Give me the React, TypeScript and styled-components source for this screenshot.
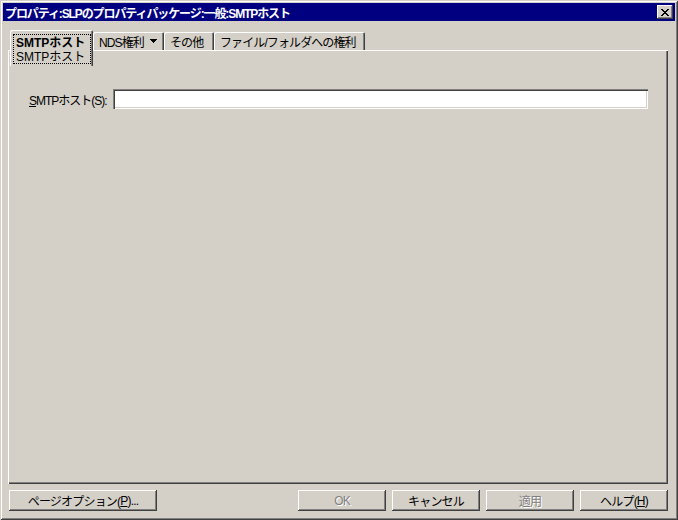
import React from "react";
import styled, { createGlobalStyle } from "styled-components";

const GlobalStyle = createGlobalStyle`
  html, body {
    margin: 0;
    padding: 0;
    background: #d4d0c8;
  }
  body {
    font-family: "Liberation Sans", "Noto Sans CJK JP", sans-serif;
    font-size: 12px;
    color: #000;
  }
`;

const Window = styled.div`
  box-sizing: border-box;
  width: 678px;
  height: 520px;
  display: flex;
  flex-direction: column;
  padding: 3px;
  background: #d4d0c8;
  box-shadow: inset 1px 1px #d4d0c8, inset -1px -1px #404040,
    inset 2px 2px #fff, inset -2px -2px #808080;
`;

const TitleBar = styled.div`
  height: 18px;
  display: flex;
  align-items: center;
  background: #000080;
  padding: 0 2px 0 2px;
`;

const TitleText = styled.span`
  flex: 1;
  color: #fff;
  font-weight: bold;
  font-size: 12px;
  letter-spacing: -1.1px;
  white-space: nowrap;
`;

const CloseButton = styled.div`
  box-sizing: border-box;
  width: 16px;
  height: 14px;
  display: flex;
  align-items: center;
  justify-content: center;
  background: #d4d0c8;
  box-shadow: inset -1px -1px #404040, inset 1px 1px #fff,
    inset -2px -2px #808080;
`;

const Body = styled.div`
  flex: 1;
  display: flex;
  flex-direction: column;
  padding: 9px 7px 6px 5px;
`;

const TabRow = styled.div`
  position: relative;
  z-index: 1;
  display: flex;
  align-items: flex-start;
  height: 20px;
  padding-left: 2px;
`;

const ActiveTab = styled.div`
  box-sizing: border-box;
  width: 83px;
  height: 36px;
  padding: 4px 2px 2px 3px;
  background: #d4d0c8;
  border-top-left-radius: 2px;
  border-top-right-radius: 2px;
  box-shadow: inset 1px 1px #fff, inset -1px 0 #404040, inset -2px 0 #808080;
`;

const FocusBox = styled.div`
  box-sizing: border-box;
  height: 100%;
  border: 1px dotted #000;
  padding: 1px 0 0 2px;
  line-height: 14px;
  white-space: nowrap;
`;

const TabTitle = styled.div`
  font-weight: bold;
`;

const Tab = styled.div<{ $width: number }>`
  box-sizing: border-box;
  width: ${(p) => p.$width}px;
  height: 18px;
  margin-top: 2px;
  display: flex;
  align-items: center;
  gap: 6px;
  padding: 0 6px;
  letter-spacing: -0.9px;
  white-space: nowrap;
  border-top-left-radius: 2px;
  border-top-right-radius: 2px;
  box-shadow: inset 1px 1px #fff, inset -1px 0 #404040, inset -2px 0 #808080;

  svg {
    flex-shrink: 0;
  }
`;

const Panel = styled.div`
  flex: 1;
  background: #d4d0c8;
  box-shadow: inset 1px 1px #fff, inset -1px -1px #404040,
    inset -2px -2px #808080;
`;

const FieldRow = styled.div`
  display: flex;
  align-items: center;
  margin-top: 39px;
  padding: 0 20px 0 21px;
`;

const FieldLabel = styled.label`
  flex-shrink: 0;
  width: 84px;
  letter-spacing: -1px;
  white-space: nowrap;
`;

const TextInput = styled.div`
  box-sizing: border-box;
  flex: 1;
  height: 20px;
  background: #fff;
  box-shadow: inset 1px 1px #808080, inset 2px 2px #404040,
    inset -1px -1px #fff, inset -2px -2px #d4d0c8;
`;

const ButtonRow = styled.div`
  display: flex;
  gap: 6px;
  margin-top: 6px;
  padding-left: 1px;
`;

const Spacer = styled.div`
  flex: 1;
`;

const Button = styled.div<{ $width: number; $disabled?: boolean }>`
  box-sizing: border-box;
  width: ${(p) => p.$width}px;
  height: 21px;
  display: flex;
  align-items: center;
  justify-content: center;
  white-space: nowrap;
  letter-spacing: -0.8px;
  background: #d4d0c8;
  color: ${(p) => (p.$disabled ? "#808080" : "#000")};
  text-shadow: ${(p) => (p.$disabled ? "1px 1px #fff" : "none")};
  box-shadow: inset -1px -1px #404040, inset 1px 1px #fff,
    inset -2px -2px #808080;
`;

const CloseGlyph = () => (
  <svg width="8" height="7" viewBox="0 0 8 7" shapeRendering="crispEdges">
    <path
      d="M0 0h2v1H0zM6 0h2v1H6zM1 1h2v1H1zM5 1h2v1H5zM2 2h4v1H2zM3 3h2v1H3zM2 4h4v1H2zM1 5h2v1H1zM5 5h2v1H5zM0 6h2v1H0zM6 6h2v1H6z"
      fill="#000"
    />
  </svg>
);

const DropArrow = () => (
  <svg width="7" height="4" viewBox="0 0 7 4" shapeRendering="crispEdges">
    <path d="M0 0h7L3.5 4z" fill="#000" />
  </svg>
);

export default function App() {
  return (
    <>
      <GlobalStyle />
      <Window>
        <TitleBar>
          <TitleText>プロパティ:SLPのプロパティパッケージ:一般:SMTPホスト</TitleText>
          <CloseButton>
            <CloseGlyph />
          </CloseButton>
        </TitleBar>
        <Body>
          <TabRow>
            <ActiveTab>
              <FocusBox>
                <TabTitle>SMTPホスト</TabTitle>
                <div>SMTPホスト</div>
              </FocusBox>
            </ActiveTab>
            <Tab $width={71}>
              NDS権利
              <DropArrow />
            </Tab>
            <Tab $width={50}>その他</Tab>
            <Tab $width={151}>ファイル/フォルダへの権利</Tab>
          </TabRow>
          <Panel>
            <FieldRow>
              <FieldLabel>
                <u>S</u>MTPホスト(S):
              </FieldLabel>
              <TextInput />
            </FieldRow>
          </Panel>
          <ButtonRow>
            <Button $width={148}>
              ページオプション(<u>P</u>)...
            </Button>
            <Spacer />
            <Button $width={88} $disabled>
              OK
            </Button>
            <Button $width={88}>キャンセル</Button>
            <Button $width={88} $disabled>
              適用
            </Button>
            <Button $width={88}>
              ヘルプ(<u>H</u>)
            </Button>
          </ButtonRow>
        </Body>
      </Window>
    </>
  );
}
